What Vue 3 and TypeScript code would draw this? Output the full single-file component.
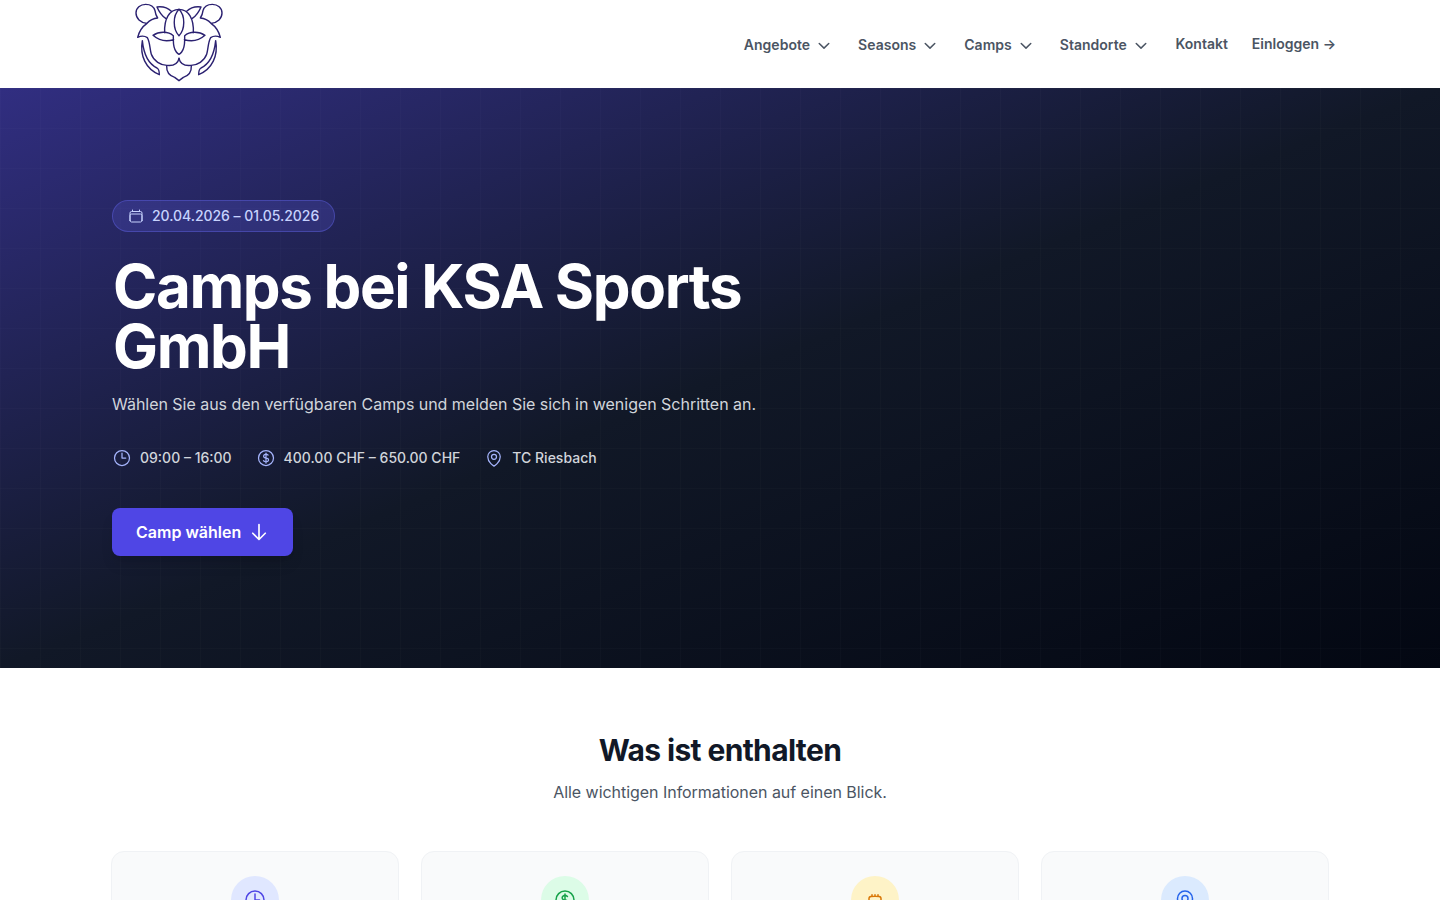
<script setup lang="ts">
const menus: string[] = ['Angebote', 'Seasons', 'Camps', 'Standorte']

const icons = {
  clock: 'M12 6v6h4.5m4.5 0a9 9 0 1 1-18 0 9 9 0 0 1 18 0Z',
  dollar:
    'M12 6v12m-3-2.818.879.659c1.171.879 3.07.879 4.242 0 1.172-.879 1.172-2.303 0-3.182C13.536 12.219 12.768 12 12 12c-.725 0-1.45-.22-2.003-.659-1.106-.879-1.106-2.303 0-3.182s2.9-.879 4.006 0l.415.33M21 12a9 9 0 1 1-18 0 9 9 0 0 1 18 0Z',
  pin: 'M15 10.5a3 3 0 1 1-6 0 3 3 0 0 1 6 0ZM19.5 10.5c0 7.142-7.5 11.25-7.5 11.25S4.5 17.642 4.5 10.5a7.5 7.5 0 1 1 15 0Z',
  cake: 'M12 8.25v-1.5m0 1.5c-1.355 0-2.697.056-4.024.166C6.845 8.51 6 9.473 6 10.608v2.513m6-4.871c1.355 0 2.697.056 4.024.166C17.155 8.51 18 9.473 18 10.608v2.513M15 8.25v-1.5m-6 1.5v-1.5m12 9.75-1.5.75a3.354 3.354 0 0 1-3 0 3.354 3.354 0 0 0-3 0 3.354 3.354 0 0 1-3 0 3.354 3.354 0 0 0-3 0 3.354 3.354 0 0 1-3 0L3 16.5m15-3.379a48.474 48.474 0 0 0-6-.371c-2.032 0-4.034.126-6 .371m12 0c.39.049.777.102 1.163.16 1.07.16 1.837 1.094 1.837 2.175v5.169c0 .621-.504 1.125-1.125 1.125H4.125A1.125 1.125 0 0 1 3 20.625v-5.17c0-1.08.768-2.014 1.837-2.174A47.78 47.78 0 0 1 6 13.12',
  calendar:
    'M6.75 3v2.25M17.25 3v2.25M3 18.75V7.5a2.25 2.25 0 0 1 2.25-2.25h13.5A2.25 2.25 0 0 1 21 7.5v11.25m-18 0A2.25 2.25 0 0 0 5.25 21h13.5A2.25 2.25 0 0 0 21 18.75m-18 0v-7.5A2.25 2.25 0 0 1 5.25 9h13.5A2.25 2.25 0 0 1 21 11.25v7.5',
  arrow: 'M19.5 13.5 12 21m0 0-7.5-7.5M12 21V3',
}

const facts = [
  { icon: icons.clock, text: '09:00 – 16:00' },
  { icon: icons.dollar, text: '400.00 CHF – 650.00 CHF' },
  { icon: icons.pin, text: 'TC Riesbach' },
]

const cards = [
  { icon: icons.clock, tone: 'indigo' },
  { icon: icons.dollar, tone: 'green' },
  { icon: icons.cake, tone: 'amber' },
  { icon: icons.pin, tone: 'blue' },
]
</script>

<template>
  <div class="page">
    <header class="header">
      <svg class="logo" viewBox="0 0 330 264">
        <path d="M66 70C46 68 33 55 33 39C33 23 46 13 62 13C78 13 87 21 90 32C91 41 94 48 98 54C85 55 74 61 66 70C53 79 43 92 38 112C49 107 60 108 67 113C75 126 74 146 79 163C86 183 107 196 126 196C147 198 159 190 162 175" />
        <path d="M258 70C278 68 291 55 291 39C291 23 278 13 262 13C246 13 237 21 234 32C233 41 230 48 226 54C239 55 250 61 258 70C271 79 281 92 286 112C275 107 264 108 257 113C249 126 250 146 245 163C238 183 217 196 198 196C177 198 165 190 162 175" />
        <path d="M139 34C128 23 112 19 96 21C102 35 109 47 122 55M185 34C196 23 212 19 228 21C222 35 215 47 202 55" />
        <path d="M119 98C117 57 133 28 162 28C191 28 207 57 205 98" />
        <path d="M162 28C143 47 143 87 162 107C181 87 181 47 162 28Z" />
        <path d="M146 119C124 126 101 121 84 106C103 93 130 94 145 107V119C145 132 148 148 154 156C157 160 160 162 162 163C164 162 167 160 170 156C176 148 179 132 179 119V107C194 94 221 93 240 106C223 121 200 126 178 119" />
        <path d="M52 122C44 167 62 207 103 224C103 214 101 207 96 204C71 192 56 161 52 122Z" />
        <path d="M272 122C280 167 262 207 221 224C221 214 223 207 228 204C253 192 268 161 272 122Z" />
        <path d="M125 197C124 216 134 227 149 232L162 242L175 232C190 227 200 216 199 197" />
      </svg>
      <nav class="nav">
        <a v-for="menu in menus" :key="menu" class="menu">
          {{ menu }}
          <svg viewBox="0 0 20 20"><path d="m5.25 8.5 4.75 4.6 4.75-4.6" /></svg>
        </a>
        <a class="link">Kontakt</a>
        <a class="link">Einloggen <span>→</span></a>
      </nav>
    </header>

    <section class="hero">
      <div class="hero-content">
        <div class="badge">
          <svg class="icon" viewBox="0 0 24 24"><path :d="icons.calendar" /></svg>
          <span>20.04.2026 – 01.05.2026</span>
        </div>
        <h1>Camps bei KSA Sports GmbH</h1>
        <p class="lead">Wählen Sie aus den verfügbaren Camps und melden Sie sich in wenigen Schritten an.</p>
        <div class="facts">
          <div v-for="fact in facts" :key="fact.text" class="fact">
            <svg class="icon" viewBox="0 0 24 24"><path :d="fact.icon" /></svg>
            {{ fact.text }}
          </div>
        </div>
        <a class="cta">
          Camp wählen
          <svg class="icon" viewBox="0 0 24 24"><path :d="icons.arrow" /></svg>
        </a>
      </div>
    </section>

    <section class="included">
      <h2>Was ist enthalten</h2>
      <p>Alle wichtigen Informationen auf einen Blick.</p>
      <div class="cards">
        <div v-for="card in cards" :key="card.tone" class="card">
          <div class="bubble" :class="card.tone">
            <svg class="icon" viewBox="0 0 24 24"><path :d="card.icon" /></svg>
          </div>
        </div>
      </div>
    </section>
  </div>
</template>

<style>
body {
  margin: 0;
  overflow: hidden;
}
</style>

<style scoped>
.page {
  height: 900px;
  overflow: hidden;
  background: #fff;
  font-family: Inter, sans-serif;
}
.icon {
  flex: none;
  fill: none;
  stroke: currentColor;
  stroke-width: 1.5;
  stroke-linecap: round;
  stroke-linejoin: round;
}
.header {
  box-sizing: border-box;
  height: 88px;
  padding: 0 104px 0 125px;
  display: flex;
  align-items: center;
  justify-content: space-between;
}
.logo {
  width: 110px;
  height: 88px;
  fill: none;
  stroke: #2b2171;
  stroke-width: 4.2;
  stroke-linecap: round;
  stroke-linejoin: round;
}
.nav {
  display: flex;
  gap: 24px;
  color: #4b5563;
  font-size: 14px;
  font-weight: 600;
  line-height: 20px;
}
.menu {
  display: flex;
  align-items: center;
  gap: 4px;
  padding-top: 1px;
  letter-spacing: 0.02px;
}
.menu:nth-child(4) {
  margin-right: 0.7px;
}
.menu svg {
  width: 20px;
  height: 20px;
  fill: none;
  stroke: currentColor;
  stroke-width: 1.5;
  stroke-linecap: round;
  stroke-linejoin: round;
}
.hero {
  box-sizing: border-box;
  height: 580px;
  padding: 112px;
  background-image:
    linear-gradient(to right, rgba(255, 255, 255, 0.015) 1px, transparent 1px),
    linear-gradient(to bottom, rgba(255, 255, 255, 0.015) 1px, transparent 1px),
    linear-gradient(to bottom right, #312e81, #111827, #030712);
  background-size: 40px 40px, 40px 40px, 100% 100%;
}
.hero-content {
  display: flex;
  flex-direction: column;
  align-items: flex-start;
  max-width: 672px;
}
.badge {
  box-sizing: border-box;
  height: 32px;
  display: flex;
  align-items: center;
  gap: 8px;
  padding: 0 15px;
  border: 1px solid rgba(99, 102, 241, 0.4);
  border-radius: 16px;
  background: rgba(99, 102, 241, 0.2);
  color: #c7d2fe;
  font-size: 14px;
  font-weight: 500;
  letter-spacing: -0.04px;
}
.badge span {
  padding-bottom: 1px;
}
.badge .icon {
  width: 16px;
  height: 16px;
}
h1 {
  margin: 24px 0 0;
  padding-left: 1px;
  color: #fff;
  font-size: 60px;
  font-weight: 700;
  line-height: 60px;
  letter-spacing: -1.38px;
  word-spacing: -0.8px;
}
.lead {
  margin: 15px 0 0;
  color: #d1d5db;
  font-size: 16px;
  line-height: 26px;
  letter-spacing: -0.03px;
  white-space: nowrap;
}
.facts {
  display: flex;
  gap: 24px;
  margin-top: 31px;
}
.fact {
  display: flex;
  align-items: center;
  gap: 8px;
  color: #d1d5db;
  font-size: 14px;
  font-weight: 500;
  line-height: 20px;
}
.fact .icon {
  width: 20px;
  height: 20px;
  color: #a5b4fc;
}
.cta {
  box-sizing: border-box;
  height: 48px;
  margin-top: 40px;
  padding: 0 24px;
  display: flex;
  align-items: center;
  gap: 8px;
  border-radius: 8px;
  background: #4f46e5;
  box-shadow: 0 10px 15px -3px rgba(0, 0, 0, 0.1), 0 4px 6px -4px rgba(0, 0, 0, 0.1);
  color: #fff;
  font-size: 16px;
  font-weight: 600;
}
.cta .icon {
  width: 20px;
  height: 20px;
  stroke-width: 2;
}
.included {
  padding: 64px 111px 0;
  text-align: center;
}
h2 {
  margin: 0;
  color: #111827;
  font-size: 30px;
  font-weight: 700;
  line-height: 36px;
  letter-spacing: -0.64px;
}
.included p {
  margin: 12px 0 0;
  color: #4b5563;
  font-size: 16px;
  line-height: 24px;
  letter-spacing: -0.04px;
}
.cards {
  display: grid;
  grid-template-columns: repeat(4, 1fr);
  gap: 22px;
  margin-top: 47px;
}
.card {
  box-sizing: border-box;
  height: 180px;
  padding-top: 24px;
  border: 1px solid #f0f2f5;
  border-radius: 13px;
  background: #f9fafb;
}
.bubble {
  width: 48px;
  height: 48px;
  margin: 0 auto;
  display: flex;
  align-items: center;
  justify-content: center;
  border-radius: 50%;
}
.bubble .icon {
  width: 24px;
  height: 24px;
}
.indigo {
  background: #e0e7ff;
  color: #4f46e5;
}
.green {
  background: #dcfce7;
  color: #16a34a;
}
.amber {
  background: #fef3c7;
  color: #d97706;
}
.blue {
  background: #dbeafe;
  color: #2563eb;
}
</style>
